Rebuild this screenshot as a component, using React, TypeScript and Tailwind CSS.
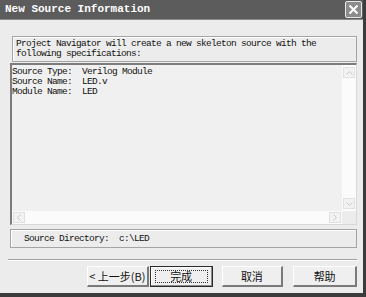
import React from "react";

const mono = { fontFamily: '"Liberation Mono", "DejaVu Sans Mono", monospace' };
const cjk = { fontFamily: '"Noto Sans CJK SC", "Liberation Sans", sans-serif' };

function Btn({ children, focus }: { children: React.ReactNode; focus?: boolean }) {
  return (
    <div
      className={
        "h-[21px] flex items-center justify-center bg-[#efefef] " +
        (focus
          ? "border border-[#2a2a2a] shadow-[inset_-1px_-1px_0_#8a8a8a,inset_1px_1px_0_#ffffff]"
          : "border-t border-l border-t-[#ffffff] border-l-[#ffffff] border-r-2 border-b-2 border-r-[#7a7a7a] border-b-[#7a7a7a]")
      }
      style={{ width: "100%" }}
    >
      {focus ? (
        <div className="w-[calc(100%-8px)] h-[13px] border border-dotted border-[#333] flex items-center justify-center">
          {children}
        </div>
      ) : (
        children
      )}
    </div>
  );
}

export default function App() {
  return (
    <div className="w-[366px] h-[297px] bg-[#ececec] flex flex-col border-r-[3px] border-b-[4px] border-[#3c3c3c] overflow-hidden">
      {/* Title bar */}
      <div className="h-[20px] bg-[#5c5c5c] flex items-center pl-[5px] pr-[1px] shrink-0 border-b border-b-[#8a8a8a]">
        <span className="text-white font-bold text-[11px] leading-none" style={mono}>
          New Source Information
        </span>
        <div className="ml-auto w-[17px] h-[17px] border border-[#e8e8e8] rounded-[2px] bg-[#8c8c8c] flex items-center justify-center">
          <svg width="11" height="11" viewBox="0 0 11 11">
            <path d="M1.5 1.5 L9.5 9.5 M9.5 1.5 L1.5 9.5" stroke="#ffffff" strokeWidth="2" />
          </svg>
        </div>
      </div>

      <div className="flex flex-col pl-[10px] pr-[6px]">
        {/* Info box */}
        <div className="mt-[16px] ml-[2px] h-[26px] border border-[#a4a4a4] shadow-[inset_1px_1px_0_#ffffff] px-[3px] pt-[2px]">
          <div className="text-[9.5px] leading-[9.5px] text-[#111] tracking-[-0.7px] whitespace-pre" style={mono}>
            {"Project Navigator will create a new skeleton source with the\nfollowing specifications:"}
          </div>
        </div>

        {/* Main text box */}
        <div className="mt-[1px] h-[162px] border-t-2 border-l-2 border-t-[#7c7c7c] border-l-[#7c7c7c] border-r border-b border-r-[#d8d8d8] border-b-[#d8d8d8] bg-[#f0f0f0] flex flex-col">
          <div className="flex flex-1 min-h-0">
            <div className="flex-1 pt-[2px]">
              <div className="text-[9.5px] leading-[10px] text-[#111] tracking-[-0.7px] whitespace-pre" style={mono}>
                {"Source Type:  Verilog Module\nSource Name:  LED.v\nModule Name:  LED"}
              </div>
            </div>
            {/* vertical scrollbar */}
            <div className="w-[14px] bg-[#fbfbfb] flex flex-col justify-between items-center py-[2px]">
              <div className="w-[12px] h-[11px] border border-[#e0e0e0] bg-[#f2f2f2] flex items-center justify-center">
                <svg width="7" height="4" viewBox="0 0 7 4"><path d="M0.5 3.5 L3.5 0.5 L6.5 3.5" stroke="#c8c8c8" fill="none" /></svg>
              </div>
              <div className="w-[12px] h-[11px] border border-[#e0e0e0] bg-[#f2f2f2] flex items-center justify-center">
                <svg width="7" height="4" viewBox="0 0 7 4"><path d="M0.5 0.5 L3.5 3.5 L6.5 0.5" stroke="#c8c8c8" fill="none" /></svg>
              </div>
            </div>
          </div>
          {/* horizontal scrollbar */}
          <div className="h-[13px] flex items-center">
            <div className="flex-1 h-[13px] bg-[#fbfbfb] flex justify-between items-center px-[1px]">
              <div className="w-[12px] h-[11px] border border-[#e0e0e0] bg-[#f2f2f2] flex items-center justify-center">
                <svg width="4" height="7" viewBox="0 0 4 7"><path d="M3.5 0.5 L0.5 3.5 L3.5 6.5" stroke="#c8c8c8" fill="none" /></svg>
              </div>
              <div className="w-[12px] h-[11px] border border-[#e0e0e0] bg-[#f2f2f2] flex items-center justify-center">
                <svg width="4" height="7" viewBox="0 0 4 7"><path d="M0.5 0.5 L3.5 3.5 L0.5 6.5" stroke="#c8c8c8" fill="none" /></svg>
              </div>
            </div>
            <div className="w-[14px] h-[13px] bg-[#ececec]" />
          </div>
        </div>

        {/* Source directory */}
        <div className="mt-[4px] h-[19px] border border-[#a4a4a4] shadow-[inset_1px_1px_0_#ffffff] flex items-center pl-[13px]">
          <span className="text-[9.5px] leading-none text-[#111] tracking-[-0.7px] whitespace-pre" style={mono}>
            {"Source Directory:  c:\\LED"}
          </span>
        </div>

        {/* Separator */}
        <div className="mt-[11px] -ml-[2px] h-[2px] border-t border-t-[#a0a0a0] border-b border-b-[#ffffff]" />

        {/* Buttons */}
        <div className="mt-[5px] flex items-center text-[11px] text-[#111]" style={cjk}>
          <div className="ml-[77px] w-[62px]">
            <Btn>
              <span className="leading-none">&lt; 上一步(B)</span>
            </Btn>
          </div>
          <div className="ml-[1px] w-[63px]">
            <Btn focus>
              <span className="leading-none">完成</span>
            </Btn>
          </div>
          <div className="ml-[9px] w-[62px]">
            <Btn>
              <span className="leading-none">取消</span>
            </Btn>
          </div>
          <div className="ml-[10px] w-[64px]">
            <Btn>
              <span className="leading-none">帮助</span>
            </Btn>
          </div>
        </div>
      </div>
    </div>
  );
}
